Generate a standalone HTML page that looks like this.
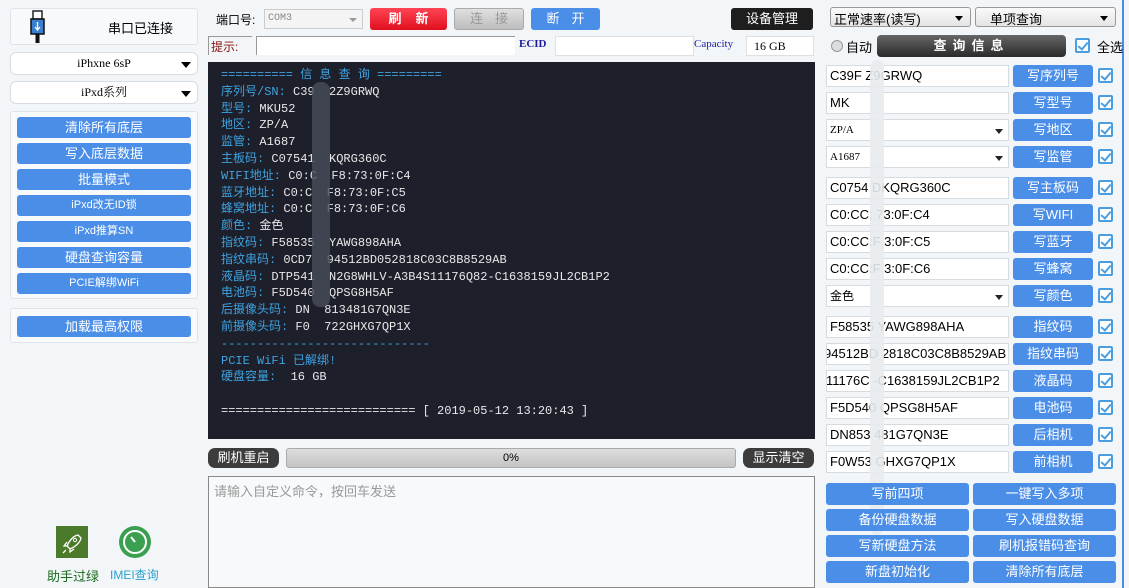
<!DOCTYPE html>
<html><head><meta charset="utf-8"><style>
*{box-sizing:border-box;margin:0;padding:0}
body{width:1129px;height:588px;background:#f3f6f9;font-family:"Liberation Sans","Noto Sans CJK SC",sans-serif;font-size:13px;position:relative;overflow:hidden;color:#000}
.a{position:absolute}
.box{position:absolute;background:#f7f9fb;border:1px solid #dfe4ea;border-radius:3px}
.sel{position:absolute;background:#fff;border:1px solid #d8dde3;border-radius:6px;text-align:center;font-family:"Liberation Serif","Noto Serif CJK SC",serif;font-size:12px;line-height:20px}
.sel:after{content:"";position:absolute;right:6px;top:9px;border-left:5px solid transparent;border-right:5px solid transparent;border-top:6px solid #000}
.bb{position:absolute;background:#4a8ee8;color:#fff;border-radius:3px;text-align:center;font-size:13px;line-height:21px;height:21px}
.con{position:absolute;left:208px;top:62px;width:607px;height:377px;background:#1d1f2b;font-family:"Liberation Mono","Noto Sans CJK SC",monospace;font-size:12px;color:#e8e8e8;padding:5px 0 0 13px;line-height:16.8px;white-space:pre}
.con b{font-weight:normal;color:#3ea3e0}
.in{position:absolute;left:826px;width:183px;height:22px;background:#fff;border:1px solid #d6dbe0;font-size:13px;line-height:20px;padding-left:3px;overflow:hidden;white-space:nowrap}
.in.s{font-family:"Liberation Serif",serif;font-size:11px}
.in.s:after{content:"";position:absolute;right:5px;top:9px;border-left:4px solid transparent;border-right:4px solid transparent;border-top:5px solid #222}
.wb{position:absolute;left:1013px;width:80px;height:22px;background:#4a8ee8;color:#fff;border-radius:3px;text-align:center;line-height:22px;font-size:13px}
.ck{position:absolute;left:1098px;width:15px;height:15px;border:2px solid #4a9ee0;border-radius:2px;background:#fff}
.ck:after{content:"";position:absolute;left:3px;top:0px;width:4px;height:8px;border-right:2px solid #4a9ee0;border-bottom:2px solid #4a9ee0;transform:rotate(40deg)}
.bt{position:absolute;width:143px;height:22px;background:#4a8ee8;color:#fff;border-radius:3px;text-align:center;line-height:22px;font-size:13px}
</style></head><body>
<div class="a" style="left:1122px;top:0;width:2px;height:588px;background:#4a8ee8"></div>
<!-- left -->
<div class="box" style="left:10px;top:8px;width:188px;height:37px"></div>
<svg class="a" style="left:28px;top:10px" width="20" height="34" viewBox="0 0 20 34"><rect x="5" y="1" width="9" height="8" fill="#fff" stroke="#222" stroke-width="1.5"/><rect x="3" y="9" width="13" height="15" fill="#3a7fd0" stroke="#111" stroke-width="1.5"/><path d="M9.5 12v8M7 17l2.5 3 2.5-3" stroke="#fff" stroke-width="1.3" fill="none"/><rect x="7.5" y="24" width="4" height="9" fill="#111"/></svg>
<div class="a" style="left:108px;top:18px;font-size:13px">串口已连接</div>
<div class="sel" style="left:10px;top:52px;width:188px;height:23px">iPhxne 6sP</div>
<div class="sel" style="left:10px;top:81px;width:188px;height:23px">iPxd系列</div>
<div class="box" style="left:10px;top:111px;width:188px;height:188px"></div>
<div class="bb" style="left:17px;top:117px;width:174px">清除所有底层</div>
<div class="bb" style="left:17px;top:143px;width:174px">写入底层数据</div>
<div class="bb" style="left:17px;top:169px;width:174px">批量模式</div>
<div class="bb" style="left:17px;top:195px;width:174px;font-size:11px">iPxd改无ID锁</div>
<div class="bb" style="left:17px;top:221px;width:174px;font-size:11px">iPxd推算SN</div>
<div class="bb" style="left:17px;top:247px;width:174px">硬盘查询容量</div>
<div class="bb" style="left:17px;top:273px;width:174px;font-size:11px">PCIE解绑WiFi</div>
<div class="box" style="left:10px;top:308px;width:188px;height:35px"></div>
<div class="bb" style="left:17px;top:316px;width:174px">加载最高权限</div>
<div class="a" style="left:56px;top:526px;width:32px;height:32px;background:#4a7a2a"><svg width="32" height="32" viewBox="0 0 32 32"><path d="M22 9c-5 1-9 6-11 11l3 3c5-2 10-6 11-11z M11 20l-3 0 3-4 M14 23v3l4-3 M10 24l-3 3" stroke="#fff" stroke-width="1.3" fill="none"/><circle cx="19" cy="14" r="1.6" stroke="#fff" fill="none"/></svg></div>
<div class="a" style="left:47px;top:566px;color:#1c6a1c;font-size:13px">助手过绿</div>
<div class="a" style="left:119px;top:526px;width:32px;height:32px;border-radius:50%;background:#3aa050"><svg width="32" height="32"><circle cx="16" cy="16" r="11" stroke="#fff" stroke-width="2" fill="none"/><path d="M16 16l-4-5" stroke="#fff" stroke-width="2"/></svg></div>
<div class="a" style="left:110px;top:566px;color:#2aa0d0;font-size:12px">IMEI查询</div>
<!-- middle top -->
<div class="a" style="left:216px;top:11px;font-size:12px">端口号:</div>
<div class="a" style="left:264px;top:9px;width:99px;height:20px;background:#f4f4f4;border:1px solid #ccc;font-size:10px;color:#888;padding:3px 3px;font-family:'Liberation Mono',monospace">COM3<span style="position:absolute;right:5px;top:8px;border-left:4px solid transparent;border-right:4px solid transparent;border-top:4px solid #999"></span></div>
<div class="a" style="left:370px;top:8px;width:77px;height:22px;background:linear-gradient(#ff4455,#e0101e);border-radius:3px;color:#fff;text-align:center;line-height:22px;letter-spacing:14px;text-indent:14px;font-weight:bold">刷新</div>
<div class="a" style="left:454px;top:8px;width:70px;height:22px;background:linear-gradient(#e0e0e0,#bdbdbd);border:1px solid #aaa;border-radius:3px;color:#999;text-align:center;line-height:20px;letter-spacing:12px;text-indent:12px">连接</div>
<div class="a" style="left:531px;top:8px;width:69px;height:22px;background:#4a8ee8;border-radius:3px;color:#fff;text-align:center;line-height:22px;letter-spacing:12px;text-indent:12px">断开</div>
<div class="a" style="left:731px;top:8px;width:82px;height:22px;background:#1e1e1e;border-radius:3px;color:#fff;text-align:center;line-height:22px">设备管理</div>
<div class="a" style="left:208px;top:36px;width:44px;height:19px;border-left:1px solid #999;border-top:1px solid #999;color:#8a0f0f;font-size:12px;padding:1px 2px">提示:</div>
<div class="a" style="left:256px;top:36px;width:259px;height:19px;background:#fff;border-left:1px solid #999;border-top:1px solid #999"></div>
<div class="a" style="left:519px;top:38px;font-family:'Liberation Serif',serif;font-size:11px;color:#1a1a9a;font-weight:bold">ECID</div>
<div class="a" style="left:555px;top:36px;width:139px;height:20px;background:#fff;border:1px solid #e0e0e0"></div>
<div class="a" style="left:694px;top:38px;font-family:'Liberation Serif',serif;font-size:11px;color:#1a1a9a">Capacity</div>
<div class="a" style="left:746px;top:36px;width:68px;height:20px;background:#fff;border:1px solid #e0e0e0;font-family:'Liberation Serif',serif;font-size:12px;padding:2px 7px">16 GB</div>
<div class="con"><b>========== 信 息 查 询 =========</b>
<b>序列号/SN:</b> C39  2Z9GRWQ
<b>型号:</b> MKU52
<b>地区:</b> ZP/A
<b>监管:</b> A1687
<b>主板码:</b> C07541  KQRG360C
<b>WIFI地址:</b> C0:C  F8:73:0F:C4
<b>蓝牙地址:</b> C0:C  F8:73:0F:C5
<b>蜂窝地址:</b> C0:C  F8:73:0F:C6
<b>颜色:</b> 金色
<b>指纹码:</b> F58535  YAWG898AHA
<b>指纹串码:</b> 0CD7  94512BD052818C03C8B8529AB
<b>液晶码:</b> DTP541  N2G8WHLV-A3B4S11176Q82-C1638159JL2CB1P2
<b>电池码:</b> F5D540  QPSG8H5AF
<b>后摄像头码:</b> DN  813481G7QN3E
<b>前摄像头码:</b> F0  722GHXG7QP1X
<b>-----------------------------</b>
<b>PCIE WiFi 已解绑!</b>
<b>硬盘容量:</b>  16 GB

=========================== [ 2019-05-12 13:20:43 ]</div>
<div class="a" style="left:312px;top:82px;width:18px;height:225px;background:#4a4e5a;border-radius:8px;opacity:.8"></div>
<div class="a" style="left:208px;top:448px;width:71px;height:20px;background:#3c3c3c;border-radius:7px;color:#fff;text-align:center;line-height:20px">刷机重启</div>
<div class="a" style="left:286px;top:448px;width:450px;height:20px;background:linear-gradient(#ddd,#c4c4c4);border:1px solid #aaa;border-radius:3px;text-align:center;font-size:11px;line-height:18px">0%</div>
<div class="a" style="left:743px;top:448px;width:71px;height:20px;background:#3c3c3c;border-radius:7px;color:#fff;text-align:center;line-height:20px">显示清空</div>
<div class="a" style="left:208px;top:476px;width:607px;height:112px;background:#f7f9fb;border:1px solid #888;color:#999;padding:4px 5px">请输入自定义命令，按回车发送</div>
<!-- right -->
<div class="a" style="left:830px;top:7px;width:141px;height:20px;background:linear-gradient(#fafafa,#e4e4e4);border:1px solid #999;border-radius:3px;padding:1px 3px">正常速率(读写)<span style="position:absolute;right:7px;top:8px;border-left:4px solid transparent;border-right:4px solid transparent;border-top:5px solid #000"></span></div>
<div class="a" style="left:975px;top:7px;width:141px;height:20px;background:linear-gradient(#fafafa,#e4e4e4);border:1px solid #999;border-radius:3px;padding:1px 14px">单项查询<span style="position:absolute;right:7px;top:8px;border-left:4px solid transparent;border-right:4px solid transparent;border-top:5px solid #000"></span></div>
<div class="a" style="left:831px;top:40px;width:12px;height:12px;border-radius:50%;border:1px solid #999;background:#ddd"></div>
<div class="a" style="left:846px;top:37px">自动</div>
<div class="a" style="left:877px;top:35px;width:189px;height:22px;background:linear-gradient(#666,#2a2a2a);border-radius:4px;color:#fff;text-align:center;line-height:22px;font-weight:bold;letter-spacing:6px">查询信息</div>
<div class="ck" style="left:1075px;top:38px"></div>
<div class="a" style="left:1097px;top:37px">全选</div>

<div class="in" style="top:65px">C39F   Z9GRWQ</div><div class="wb" style="top:65px">写序列号</div><div class="ck" style="top:68px"></div>
<div class="in" style="top:92px">MK</div><div class="wb" style="top:92px">写型号</div><div class="ck" style="top:95px"></div>
<div class="in s" style="top:119px">ZP/A</div><div class="wb" style="top:119px">写地区</div><div class="ck" style="top:122px"></div>
<div class="in s" style="top:146px">A1687</div><div class="wb" style="top:146px">写监管</div><div class="ck" style="top:149px"></div>
<div class="in" style="top:177px">C0754   DKQRG360C</div><div class="wb" style="top:177px">写主板码</div><div class="ck" style="top:180px"></div>
<div class="in" style="top:204px">C0:CC:    73:0F:C4</div><div class="wb" style="top:204px">写WIFI</div><div class="ck" style="top:207px"></div>
<div class="in" style="top:231px">C0:CC:F   3:0F:C5</div><div class="wb" style="top:231px">写蓝牙</div><div class="ck" style="top:234px"></div>
<div class="in" style="top:258px">C0:CC:F   3:0F:C6</div><div class="wb" style="top:258px">写蜂窝</div><div class="ck" style="top:261px"></div>
<div class="in s" style="top:285px;font-size:12px">金色</div><div class="wb" style="top:285px">写颜色</div><div class="ck" style="top:288px"></div>
<div class="in" style="top:316px">F58535    YAWG898AHA</div><div class="wb" style="top:316px">指纹码</div><div class="ck" style="top:319px"></div>
<div class="in" style="top:343px;text-indent:-6px">94512BD    2818C03C8B8529AB</div><div class="wb" style="top:343px">指纹串码</div><div class="ck" style="top:346px"></div>
<div class="in" style="top:370px;text-indent:-4px">11176C    -C1638159JL2CB1P2</div><div class="wb" style="top:370px">液晶码</div><div class="ck" style="top:373px"></div>
<div class="in" style="top:397px">F5D540    QPSG8H5AF</div><div class="wb" style="top:397px">电池码</div><div class="ck" style="top:400px"></div>
<div class="in" style="top:424px">DN853    481G7QN3E</div><div class="wb" style="top:424px">后相机</div><div class="ck" style="top:427px"></div>
<div class="in" style="top:451px">F0W53    GHXG7QP1X</div><div class="wb" style="top:451px">前相机</div><div class="ck" style="top:454px"></div>
<div class="a" style="left:870px;top:60px;width:14px;height:475px;background:#e8ebee;border-radius:7px;opacity:.9"></div>

<div class="bt" style="left:826px;top:483px">写前四项</div><div class="bt" style="left:973px;top:483px">一键写入多项</div>
<div class="bt" style="left:826px;top:509px">备份硬盘数据</div><div class="bt" style="left:973px;top:509px">写入硬盘数据</div>
<div class="bt" style="left:826px;top:535px">写新硬盘方法</div><div class="bt" style="left:973px;top:535px">刷机报错码查询</div>
<div class="bt" style="left:826px;top:561px">新盘初始化</div><div class="bt" style="left:973px;top:561px">清除所有底层</div>
</body></html>
